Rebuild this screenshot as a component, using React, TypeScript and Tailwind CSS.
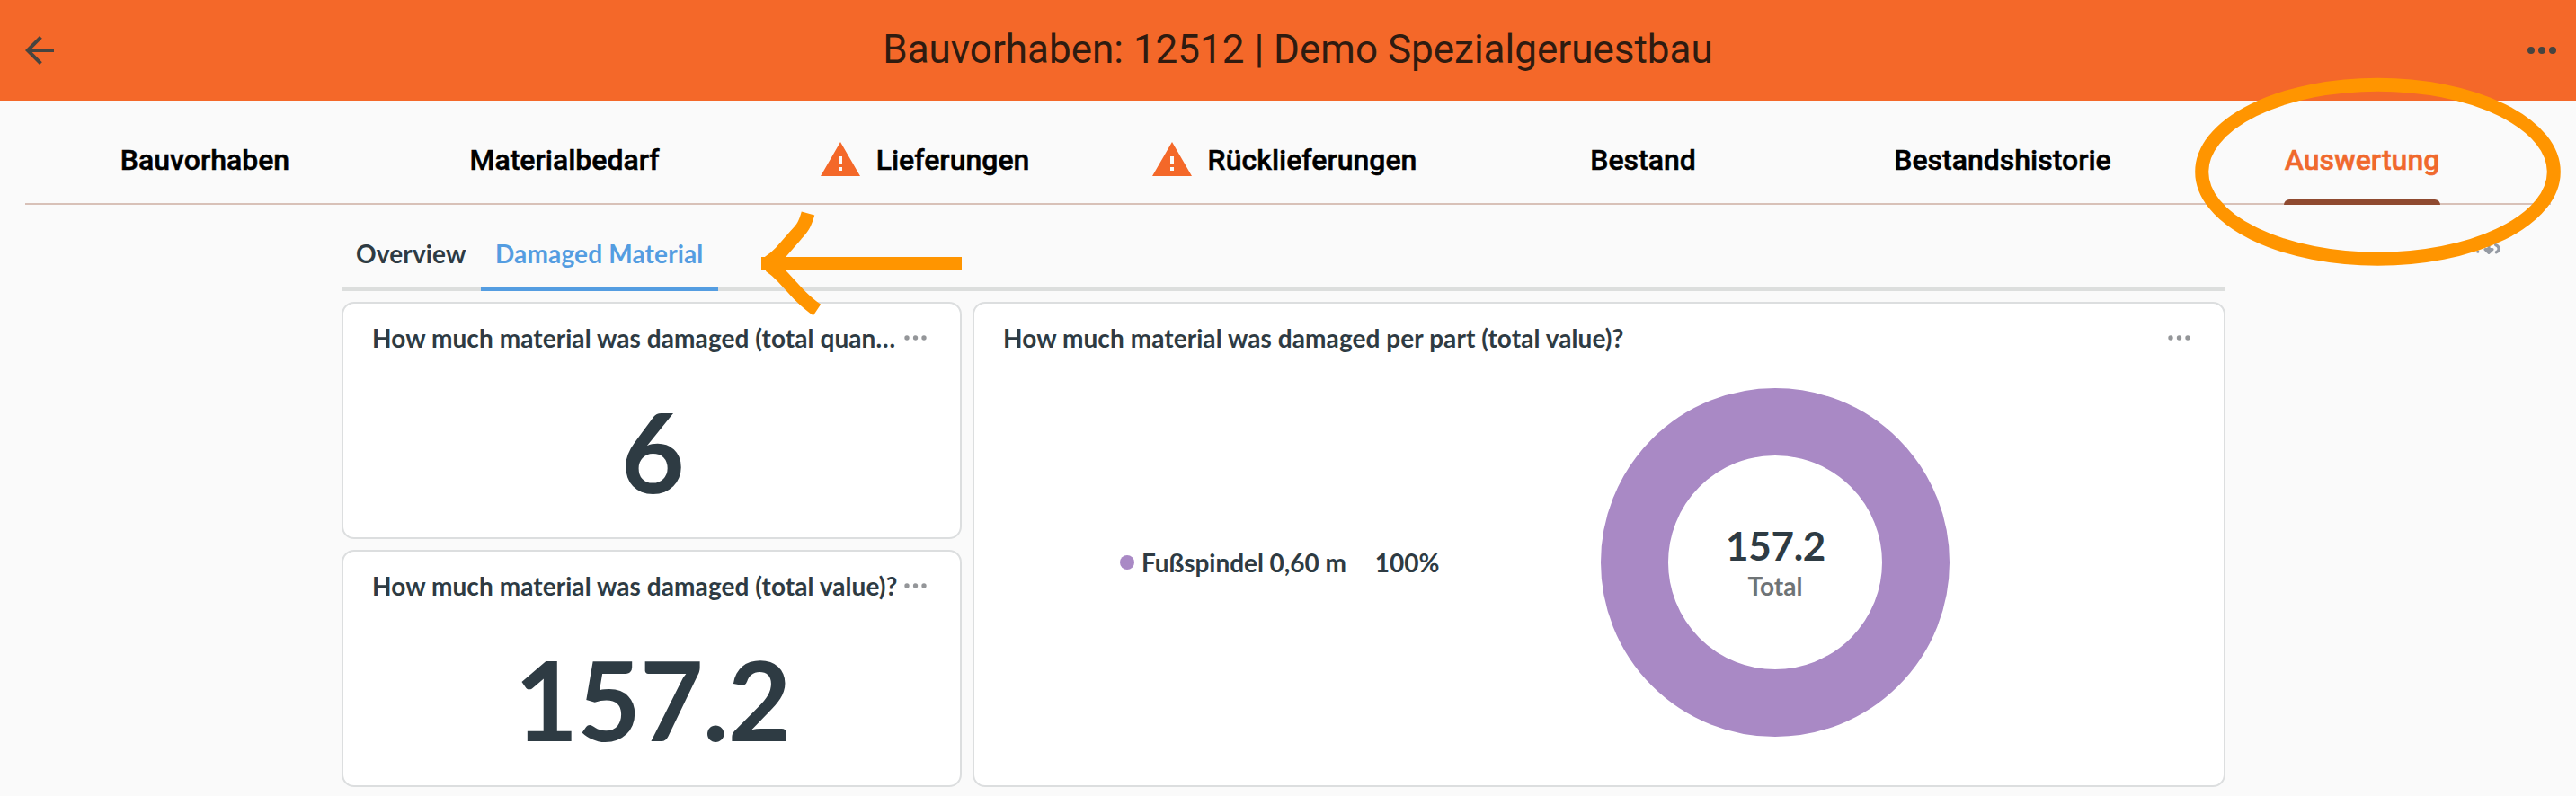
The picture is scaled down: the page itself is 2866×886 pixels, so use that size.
import React from "react";

const tabs = [
  { label: "Bauvorhaben" },
  { label: "Materialbedarf" },
  { label: "Lieferungen", warn: true },
  { label: "Rücklieferungen", warn: true },
  { label: "Bestand" },
  { label: "Bestandshistorie" },
  { label: "Auswertung", active: true },
];

function Dots() {
  return (
    <svg className="h-[6px] w-[25px] shrink-0 fill-[#949699]" viewBox="0 0 25 6">
      <circle cx="3" cy="3" r="2.7" />
      <circle cx="12.5" cy="3" r="2.7" />
      <circle cx="22" cy="3" r="2.7" />
    </svg>
  );
}

function Card({ title, children, className = "" }: { title: string; children: React.ReactNode; className?: string }) {
  return (
    <section className={`flex flex-col rounded-[14px] border-2 border-[#dcdedf] bg-white ${className}`}>
      <div className="flex h-[76px] items-center justify-between pl-8 pr-[37px]">
        <h2 className="text-[28px] leading-[34px] font-bold tracking-[0.07px] whitespace-nowrap">{title}</h2>
        <Dots />
      </div>
      {children}
    </section>
  );
}

export default function App() {
  return (
    <div className="relative h-[886px] w-[2866px] overflow-hidden bg-[#fafafa] font-['Lato',sans-serif] text-[#2e3b43]">
      <header className="flex h-28 items-center justify-between bg-[#f46829] pr-[22px] pl-5">
        <svg className="size-12 fill-[#464440]" viewBox="0 0 24 24">
          <path d="M20 11H7.83l5.59-5.59L12 4l-8 8 8 8 1.41-1.41L7.83 13H20v-2z" />
        </svg>
        <h1 className="mb-[2px] ml-2 font-['Roboto',sans-serif] text-[44px] leading-none text-[#2f1b10]">
          Bauvorhaben: 12512 | Demo Spezialgeruestbau
        </h1>
        <svg className="h-2 w-8 fill-[#464440]" viewBox="0 0 32 8">
          <circle cx="4" cy="4" r="4" />
          <circle cx="16" cy="4" r="4" />
          <circle cx="28" cy="4" r="4" />
        </svg>
      </header>

      <nav className="mx-7 flex h-[116px] border-b-2 border-[#d8c1b8] font-['Roboto',sans-serif] text-[32px] font-medium text-black [-webkit-text-stroke:0.5px]">
        {tabs.map((t) => (
          <div key={t.label} className="flex w-[400px] flex-col items-center justify-between">
            <div className="flex h-[110px] items-center gap-4 pt-[22px]">
              {t.warn && (
                <svg className="size-12 fill-[#f46829]" viewBox="0 0 24 24">
                  <path d="M1 21h22L12 2 1 21zm12-3h-2v-2h2v2zm0-4h-2v-4h2v4z" />
                </svg>
              )}
              <span className={t.active ? "text-[#f0692d]" : ""}>{t.label}</span>
            </div>
            {t.active && <div className="-mb-[2px] h-[6px] w-[174px] shrink-0 rounded-t-[6px] bg-[#8f4a30]" />}
          </div>
        ))}
      </nav>

      <main className="ml-[380px] w-[2096px]">
        <div className="flex h-24 border-b-4 border-[#dcdedd] text-[28px] font-bold tracking-[0.15px]">
          <div className="w-[155px] pt-[37px] pl-4 leading-[34px]">Overview</div>
          <div className="-mb-1 w-[264px] border-b-4 border-[#549de1] pt-[37px] pl-4 leading-[34px] text-[#549de1]">
            Damaged Material
          </div>
        </div>
        <div className="mt-3 flex h-[540px] gap-3">
          <div className="flex w-[690px] flex-col gap-3">
            <Card title="How much material was damaged (total quan…" className="h-[264px]">
              <div className="pt-4 pl-[2px] text-center text-[122px] leading-[144px] font-bold tracking-[-1px]">6</div>
            </Card>
            <Card title="How much material was damaged (total value)?" className="h-[264px]">
              <div className="pt-4 pl-[2px] text-center text-[122px] leading-[144px] font-bold tracking-[-1px]">157.2</div>
            </Card>
          </div>
          <Card title="How much material was damaged per part (total value)?" className="flex-1">
            <div className="flex pt-[18px] pl-[162px]">
              <div className="flex w-[535px] items-center text-[28px] leading-[34px] font-bold tracking-[-0.05px]">
                <span className="mr-2 size-4 rounded-full bg-[#a989c5]" />
                <span className="mr-8">Fußspindel 0,60 m</span>
                <span>100%</span>
              </div>
              <div className="flex size-[388px] flex-col items-center justify-center rounded-full border-[75px] border-[#a989c5]">
                <div className="-mt-[2px] mb-[2px] pl-px text-[44px] leading-[52px] font-bold tracking-[-0.3px]">157.2</div>
                <div className="text-[28px] leading-[34px] font-bold text-[#6f7476]">Total</div>
              </div>
            </div>
          </Card>
        </div>
      </main>

      <svg className="pointer-events-none absolute inset-0 h-[886px] w-[2866px]" viewBox="0 0 2866 886" fill="none">
        <g stroke="#959aa3" strokeWidth="3.2" strokeLinecap="round">
          <path d="M2769 268v9" />
          <path d="M2765 277.5h8l-4 3.8z" fill="#959aa3" strokeLinejoin="round" />
          <path d="M2756.8 280v.2M2776.5 272.5c4.5 2 4.8 6.5 .8 8.3" />
        </g>
        <g stroke="#ff9500" strokeWidth="15">
          <path d="M847 293.5H1070" />
          <path d="M899 237.5C895.500 250 893 253.500 886 261L869 280.500C864 286 860 289 854.500 292.500" />
          <path d="M856 295.500C862 299.500 866 303 871 308.500L889 328C896 335 900 339 909 345" />
          <ellipse cx="2645.5" cy="191.2" rx="195.8" ry="97" />
        </g>
      </svg>
    </div>
  );
}
